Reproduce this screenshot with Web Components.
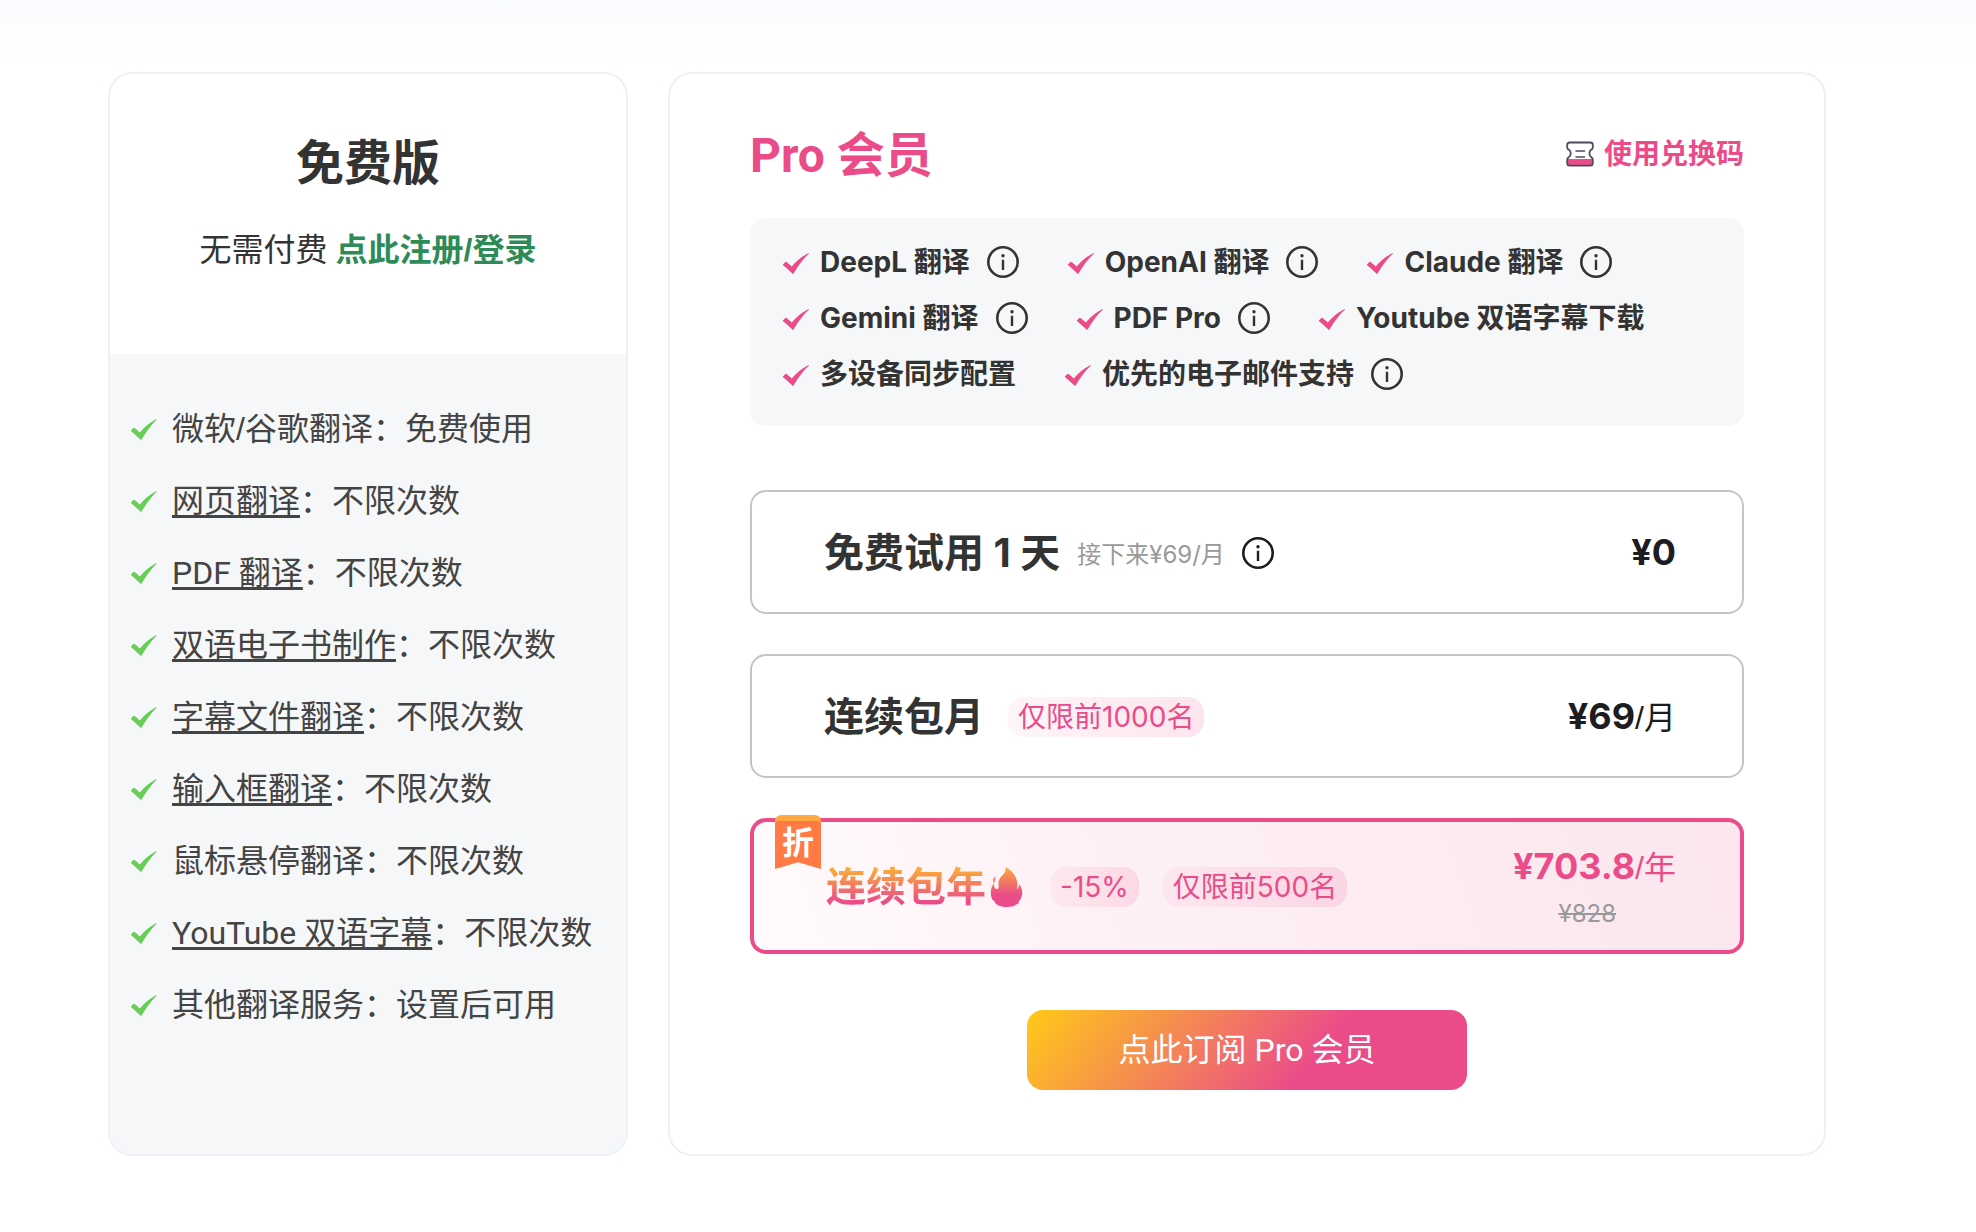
<!DOCTYPE html>
<html lang="zh-CN">
<head>
<meta charset="utf-8">
<meta name="viewport" content="width=device-width, initial-scale=1">
<title>Pro 会员</title>
<style>
  body {
    margin: 0;
    min-height: 100vh;
    background: linear-gradient(#fbfcff 0, #ffffff 64px) #ffffff;
    font-family: Inter, "Noto Sans CJK SC", sans-serif;
    color: #333333;
    --pink: #eb4c89;
    --panel: #f6f7f9;
    --line: #ecf1f8;
    --narrow: Roboto, "Noto Sans CJK SC", sans-serif;
    --plain: "Liberation Sans", "Noto Sans CJK SC", sans-serif;
  }
</style>
</head>
<body>
<pricing-page></pricing-page>

<script>
function define(name, html) {
  const template = document.createElement("template");
  template.innerHTML = html;
  customElements.define(name, class extends HTMLElement {
    constructor() {
      super();
      this.attachShadow({ mode: "open" }).append(template.content.cloneNode(true));
    }
  });
}

define("check-icon", `
<style>
  :host { display: block; flex: none; width: 28px; height: 28px; }
  svg { display: block; }
</style>
<svg width="28" height="28" viewBox="0 0 28 28" fill="currentColor" aria-hidden="true">
  <path d="M1 16.2 L3.4 13.9 Q4.2 13.5 5 14.3 L9.8 18.4 Q16.5 10.2 26.6 5 L27 5.5 Q18.8 13 11.6 25.6 Q11 26.4 10.4 25.6 Q6.2 21.4 1.2 17.2 Q.6 16.7 1 16.2Z"/>
</svg>`);

define("info-icon", `
<style>
  :host { display: block; flex: none; width: 32px; height: 32px; }
  svg { display: block; }
</style>
<svg width="32" height="32" viewBox="0 0 32 32" fill="none" stroke="currentColor" aria-hidden="true">
  <circle cx="16" cy="16" r="14.7" stroke-width="2.6"/>
  <circle cx="16" cy="9.8" r="1.7" fill="currentColor" stroke="none"/>
  <path d="M16 13.8V24" stroke-width="2.4"/>
</svg>`);

define("ticket-icon", `
<style>
  :host { display: block; flex: none; width: 28px; height: 26px; }
  svg { display: block; }
</style>
<svg width="28" height="26" viewBox="0 0 28 26" fill="none" aria-hidden="true">
  <path d="M1.5 18H26.5V22Q26.5 24 24.5 24H3.5Q1.5 24 1.5 22Z" fill="#eb4c89"/>
  <path d="M3.5 1.5H24.5Q26.8 1.5 26.8 4V6.5Q26.8 7.8 25.4 8.6Q23.4 10 23.4 12.5T25.6 16.5Q26.8 17.3 26.8 18.7V22Q26.8 24.6 24.5 24.6H3.5Q1.2 24.6 1.2 22V18.7Q1.2 17.3 2.4 16.5Q4.8 15 4.8 12.5T2.6 8.6Q1.2 7.8 1.2 6.5V4Q1.2 1.5 3.5 1.5Z" stroke="#4d4a5c" stroke-width="1.8"/>
  <path d="M10 10H18.5M10 16H18.5" stroke="#4d4a5c" stroke-width="1.6" stroke-linecap="round"/>
</svg>`);

define("flame-icon", `
<style>
  :host { display: block; flex: none; width: 40px; height: 40px; }
  svg { display: block; }
</style>
<svg width="40" height="40" viewBox="0 0 40 40" aria-hidden="true">
  <defs>
    <linearGradient id="heat" x1="0" y1="0" x2="0" y2="1">
      <stop offset="0" stop-color="#fcab38"/>
      <stop offset=".7" stop-color="#eb4c89"/>
    </linearGradient>
  </defs>
  <path fill="url(#heat)" d="M19.5 0C26 3.5 30 9 31.2 15C31.6 17.5 31.4 20 31 22.5C32.3 21.5 33 19.5 33.2 17C35.5 20 36.8 24 36 28C35.4 31 34 33.5 32.2 35L33.2 35.4C30 38.5 26 40 21 40C15 40 10.5 38 8 35L9.6 35.2L6.2 32.4C5.2 30 4.4 27 5 23C5.3 20.5 6.5 18 8 16.2C7.8 19 8.5 21.2 10 22C11.8 22.6 13 21.2 12.6 19C12 13.5 13.5 11 16.5 8.2C19 6 20 3.5 19.5 0ZM9.8 9C9.2 11.5 9.5 13 8.3 16C6.3 14.6 6.6 11.5 9.8 9Z"/>
</svg>`);

define("free-benefit", `
<style>
  :host { display: flex; align-items: center; gap: 14px; height: 72px; font-size: 32px; line-height: 48px; color: #444444; white-space: nowrap; }
  check-icon { margin-bottom: 2px; color: #67cf54; }
</style>
<check-icon></check-icon>
<div><slot></slot></div>`);

define("free-card", `
<style>
  :host { display: flex; flex-direction: column; box-sizing: border-box; border: 2px solid var(--line); border-radius: 24px; overflow: hidden; background: #ffffff; font-family: var(--narrow); }
  header { display: flex; flex-direction: column; align-items: center; gap: 24px; padding: 54px 24px 78px; }
  h2 { margin: 0; font-size: 48px; line-height: 72px; font-weight: 600; }
  p { margin: 0; font-size: 32px; line-height: 52px; }
  p a { color: #2e8b57; font-weight: 600; text-decoration: none; }
  .plain { font-family: var(--plain); }
  .list { flex: 1; padding: 39px 20px; background: var(--panel); }
  free-benefit a { color: inherit; text-decoration: underline; text-decoration-thickness: 3px; text-underline-offset: 3px; text-decoration-skip-ink: none; }
</style>
<header>
  <h2>免费版</h2>
  <p>无需付费 <a class="plain" href="#login">点此注册/登录</a></p>
</header>
<div class="list">
  <free-benefit class="plain">微软/谷歌翻译：免费使用</free-benefit>
  <free-benefit><a href="#web">网页翻译</a>：不限次数</free-benefit>
  <free-benefit><a href="#pdf">PDF 翻译</a>：不限次数</free-benefit>
  <free-benefit><a href="#ebook">双语电子书制作</a>：不限次数</free-benefit>
  <free-benefit><a href="#subtitle">字幕文件翻译</a>：不限次数</free-benefit>
  <free-benefit><a href="#input">输入框翻译</a>：不限次数</free-benefit>
  <free-benefit>鼠标悬停翻译：不限次数</free-benefit>
  <free-benefit><a href="#youtube">YouTube 双语字幕</a>：不限次数</free-benefit>
  <free-benefit>其他翻译服务：设置后可用</free-benefit>
</div>`);

define("pro-feature", `
<style>
  :host { display: flex; align-items: center; height: 56px; font-size: 28px; line-height: 40px; font-weight: 700; white-space: nowrap; }
  check-icon { color: var(--pink); margin-right: 10px; }
  info-icon { display: none; margin-left: 17px; }
  :host([info]) info-icon { display: block; }
</style>
<check-icon></check-icon>
<slot></slot>
<info-icon></info-icon>`);

define("limit-badge", `
<style>
  :host { display: block; padding: 0 10px; border-radius: 16px; font-size: 28px; line-height: 40px; font-weight: 400; color: var(--pink); background: linear-gradient(80deg, rgba(235, 76, 137, .05), rgba(235, 76, 137, .15)); white-space: nowrap; }
</style>
<slot></slot>`);

define("sale-ribbon", `
<style>
  :host { position: absolute; left: 25px; top: -3px; width: 46px; height: 54px; }
  .band { height: 12px; border-radius: 6px 6px 0 0; background: #ffa940; }
  .cloth { height: 48px; margin-top: -6px; border-radius: 4px 4px 0 0; background: #ff7a45; clip-path: polygon(0 0, 100% 0, 100% 100%, 50% 86%, 0 100%); color: #ffffff; font-size: 32px; line-height: 44px; font-weight: 700; text-align: center; }
</style>
<div class="band"></div>
<div class="cloth"><slot></slot></div>`);

define("plan-option", `
<style>
  :host { display: block; position: relative; }
  button { display: flex; align-items: center; justify-content: space-between; box-sizing: border-box; width: 100%; height: 124px; padding: 2px 66px 0 72px; border: 2px solid #c5c5c5; border-radius: 16px; background: #ffffff; font: inherit; text-align: left; color: #1c1c22; cursor: pointer; white-space: nowrap; }
  .name { display: flex; align-items: center; }
  .title { font-size: 40px; line-height: 60px; font-weight: 700; color: #333333; }
  .cost { display: flex; flex-direction: column; align-items: flex-end; }
  .price { font-family: var(--plain); font-size: 32px; line-height: 52px; }
  ::slotted(b) { font-family: Inter, sans-serif; font-size: 36px; font-weight: 700; }
  ::slotted(small) { margin: 4px 17px 0; font-size: 24px; line-height: 36px; color: #999999; }
  ::slotted(limit-badge) { margin-left: 24px; }
  .old { display: none; margin-right: 60px; font-size: 24px; line-height: 40px; color: #999999; text-decoration: line-through; }
  :host([selected]) button { height: 136px; padding: 2px 64px 0 72px; border: 4px solid var(--pink); background: linear-gradient(70deg, #fffbfc, #fef1f5 35%, #fbe6ee); color: var(--pink); }
  :host([selected]) .title { background: linear-gradient(#fcab38 20%, #eb4c89 75%); -webkit-background-clip: text; background-clip: text; color: transparent; }
  :host([selected]) .old { display: block; }
</style>
<button type="button">
  <span class="name"><span class="title"><slot name="title"></slot></span><slot name="note"></slot></span>
  <span class="cost"><span class="price"><slot name="price"></slot></span><s class="old"><slot name="old"></slot></s></span>
</button>
<slot name="ribbon"></slot>`);

define("pro-card", `
<style>
  :host { display: flex; flex-direction: column; box-sizing: border-box; padding: 50px 80px 64px; border: 2px solid var(--line); border-radius: 24px; background: #ffffff; }
  header { display: flex; align-items: flex-start; justify-content: space-between; height: 64px; margin-bottom: 30px; color: var(--pink); }
  h2 { margin: 0; font-family: var(--narrow); font-size: 48px; line-height: 64px; font-weight: 700; }
  .redeem { display: flex; align-items: center; gap: 10px; color: inherit; font-size: 28px; line-height: 60px; font-weight: 600; text-decoration: none; }
  .features { display: flex; flex-wrap: wrap; column-gap: 48px; padding: 16px 32px 24px; border-radius: 16px; background: var(--panel); }
  .plans { display: flex; flex-direction: column; gap: 40px; margin: 64px 0 56px; }
  .subscribe { align-self: center; width: 440px; height: 80px; border: 0; border-radius: 16px; background: linear-gradient(129deg, #ffca18, #eb4c89 65%); color: #ffffff; font-family: var(--narrow); font-size: 32px; line-height: 48px; cursor: pointer; }
</style>
<header>
  <h2>Pro 会员</h2>
  <a class="redeem" href="#redeem"><ticket-icon></ticket-icon>使用兑换码</a>
</header>
<div class="features">
  <pro-feature info>DeepL 翻译</pro-feature>
  <pro-feature info>OpenAI 翻译</pro-feature>
  <pro-feature info>Claude 翻译</pro-feature>
  <pro-feature info>Gemini 翻译</pro-feature>
  <pro-feature info>PDF Pro</pro-feature>
  <pro-feature>Youtube 双语字幕下载</pro-feature>
  <pro-feature>多设备同步配置</pro-feature>
  <pro-feature info>优先的电子邮件支持</pro-feature>
</div>
<div class="plans">
  <plan-option>
    <span slot="title">免费试用 1 天</span>
    <small slot="note">接下来¥69/月</small>
    <info-icon slot="note"></info-icon>
    <b slot="price">¥0</b>
  </plan-option>
  <plan-option>
    <span slot="title">连续包月</span>
    <limit-badge slot="note">仅限前1000名</limit-badge>
    <b slot="price">¥69</b><span slot="price">/月</span>
  </plan-option>
  <plan-option selected>
    <sale-ribbon slot="ribbon">折</sale-ribbon>
    <span slot="title">连续包年</span>
    <flame-icon slot="note"></flame-icon>
    <limit-badge slot="note">-15%</limit-badge>
    <limit-badge slot="note">仅限前500名</limit-badge>
    <b slot="price">¥703.8</b><span slot="price">/年</span>
    <span slot="old">¥828</span>
  </plan-option>
</div>
<button class="subscribe" type="button">点此订阅 Pro 会员</button>`);

define("pricing-page", `
<style>
  :host { display: grid; grid-template-columns: 520px minmax(0, 1fr); gap: 40px; padding: 72px 150px 76px 108px; }
</style>
<free-card></free-card>
<pro-card></pro-card>`);
</script>
</body>
</html>
